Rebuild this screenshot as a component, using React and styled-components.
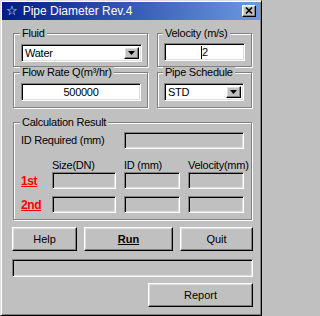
import React from "react";
import styled, { createGlobalStyle, css } from "styled-components";

const GlobalStyle = createGlobalStyle`
  html, body {
    margin: 0;
    padding: 0;
    background: #c0c0c0;
  }
  body {
    font-family: "Liberation Sans", Arial, sans-serif;
  }
`;

const sunken = css`
  box-sizing: border-box;
  border: 1px solid;
  border-color: #808080 #fff #fff #808080;
  box-shadow: inset 1px 1px #000, inset -1px -1px #dfdfdf;
`;

const raised = css`
  box-sizing: border-box;
  border: 1px solid;
  border-color: #fff #000 #000 #fff;
  box-shadow: inset -1px -1px #808080, inset 1px 1px #dfdfdf;
  background: #c0c0c0;
`;

const Window = styled.div`
  width: 262px;
  height: 316px;
  box-sizing: border-box;
  background: #c0c0c0;
  border: 1px solid;
  border-color: #dfdfdf #000 #000 #dfdfdf;
  box-shadow: inset 1px 1px #fff, inset -1px -1px #808080;
  padding: 1px;
  display: flex;
  flex-direction: column;
  font-size: 11px;
  letter-spacing: -0.25px;
  color: #000;
`;

const TitleBar = styled.div`
  height: 18px;
  flex: none;
  display: flex;
  align-items: center;
  padding: 0 4px 1px 4px;
  box-sizing: border-box;
  background: linear-gradient(to right, #001b86, #6c9ae0);
  color: #fff;
  font-size: 12px;
  letter-spacing: 0;
`;

const Star = styled.span`
  font-family: "DejaVu Sans", sans-serif;
  font-size: 13px;
  margin-right: 5px;
`;

const CloseButton = styled.div`
  ${raised};
  margin-left: auto;
  width: 14px;
  height: 12px;
  display: flex;
  align-items: center;
  justify-content: center;
`;

const Body = styled.div`
  padding: 8px 7px 0 10px;
  display: flex;
  flex-direction: column;
`;

const GroupRow = styled.div`
  display: flex;
  gap: 9px;
  margin-left: 1px;
`;

const Group = styled.fieldset`
  margin: 0;
  min-width: 0;
  box-sizing: border-box;
  width: ${(p) => p.$w}px;
  border: 1px solid #808080;
  box-shadow: inset 1px 1px #fff, 1px 1px #fff;
  padding: ${(p) => p.$pad};
`;

const CalcGroup = styled(Group)`
  margin: 9px 0 0 1px;
`;

const Legend = styled.legend`
  padding: 0 2px;
  margin-left: -1px;
  font-size: 11px;
  line-height: 11px;
  background: #c0c0c0;
  white-space: nowrap;
`;

const Combo = styled.div`
  ${sunken};
  width: ${(p) => p.$w}px;
  height: 18px;
  padding: 2px;
  background: #fff;
  display: flex;
  align-items: center;
`;

const ComboText = styled.span`
  flex: 1;
  padding-left: 1px;
`;

const DropButton = styled.div`
  ${raised};
  width: 15px;
  height: 100%;
  display: flex;
  align-items: center;
  justify-content: center;
`;

const Field = styled.div`
  ${sunken};
  width: ${(p) => p.$w}px;
  height: 18px;
  margin-top: ${(p) => p.$mt || 0}px;
  background: #fff;
  display: flex;
  align-items: center;
  justify-content: center;
`;

const Caret = styled.span`
  width: 1px;
  height: 13px;
  background: #000;
`;

const ResultGrid = styled.div`
  display: grid;
  grid-template-columns: 23px 64px 56px 56px;
  grid-template-rows: 17px 23px 17px 24px;
  column-gap: 8px;
  align-items: end;
`;

const IdLabel = styled.span`
  grid-column: 1 / span 2;
  line-height: 17px;
  white-space: nowrap;
`;

const ColHead = styled.span`
  line-height: 13px;
  white-space: nowrap;
`;

const RankLabel = styled.span`
  color: #ff0000;
  font-weight: bold;
  font-size: 12px;
  letter-spacing: -0.4px;
  text-decoration: underline;
  line-height: 16px;
`;

const ResultBox = styled.div`
  ${sunken};
  height: 17px;
  background: #c0c0c0;
  grid-column: ${(p) => p.$span || "auto"};
`;

const ButtonRow = styled.div`
  display: flex;
  gap: 7px;
  margin-top: ${(p) => p.$mt}px;
  justify-content: ${(p) => p.$align || "flex-start"};
`;

const Button = styled.button`
  ${raised};
  width: ${(p) => p.$w}px;
  height: 24px;
  padding: 0;
  font-family: inherit;
  font-size: 11px;
  letter-spacing: 0;
  color: #000;
  font-weight: ${(p) => (p.$bold ? "bold" : "normal")};
  text-decoration: ${(p) => (p.$bold ? "underline" : "none")};
`;

const Progress = styled.div`
  ${sunken};
  height: 18px;
  margin-top: 8px;
`;

const Arrow = () => (
  <svg width="7" height="4" viewBox="0 0 7 4">
    <path d="M0 0h7L3.5 4z" fill="#000" />
  </svg>
);

const CloseGlyph = () => (
  <svg width="8" height="7" viewBox="0 0 8 7">
    <path d="M1 0.5l6 6M7 0.5l-6 6" stroke="#000" strokeWidth="1.6" />
  </svg>
);

export default function App() {
  return (
    <>
      <GlobalStyle />
      <Window>
        <TitleBar>
          <Star>☆</Star>
          Pipe Diameter Rev.4
          <CloseButton>
            <CloseGlyph />
          </CloseButton>
        </TitleBar>
        <Body>
          <GroupRow>
            <Group $w={135} $pad="5px 5px 4px 7px">
              <Legend>Fluid</Legend>
              <Combo $w={121}>
                <ComboText>Water</ComboText>
                <DropButton>
                  <Arrow />
                </DropButton>
              </Combo>
            </Group>
            <Group $w={95} $pad="4px 6px 4px 6px">
              <Legend>Velocity (m/s)</Legend>
              <Field $w={81}>
                <Caret />2
              </Field>
            </Group>
          </GroupRow>
          <GroupRow>
            <Group $w={135} $pad="5px 5px 6px 7px">
              <Legend>Flow Rate Q(m³/hr)</Legend>
              <Field $w={120}>500000</Field>
            </Group>
            <Group $w={95} $pad="5px 6px 6px 6px">
              <Legend>Pipe Schedule</Legend>
              <Combo $w={80}>
                <ComboText>STD</ComboText>
                <DropButton>
                  <Arrow />
                </DropButton>
              </Combo>
            </Group>
          </GroupRow>
          <CalcGroup $w={239} $pad="4px 6px 6px 7px">
            <Legend>Calculation Result</Legend>
            <ResultGrid>
              <IdLabel>ID Required (mm)</IdLabel>
              <ResultBox $span="3 / span 2" />
              <span />
              <ColHead>Size(DN)</ColHead>
              <ColHead>ID (mm)</ColHead>
              <ColHead>Velocity(mm)</ColHead>
              <RankLabel>1st</RankLabel>
              <ResultBox />
              <ResultBox />
              <ResultBox />
              <RankLabel>2nd</RankLabel>
              <ResultBox />
              <ResultBox />
              <ResultBox />
            </ResultGrid>
          </CalcGroup>
          <ButtonRow $mt={7}>
            <Button $w={65}>Help</Button>
            <Button $w={89} $bold>
              Run
            </Button>
            <Button $w={73}>Quit</Button>
          </ButtonRow>
          <Progress />
          <ButtonRow $mt={6} $align="flex-end">
            <Button $w={105}>Report</Button>
          </ButtonRow>
        </Body>
      </Window>
    </>
  );
}
